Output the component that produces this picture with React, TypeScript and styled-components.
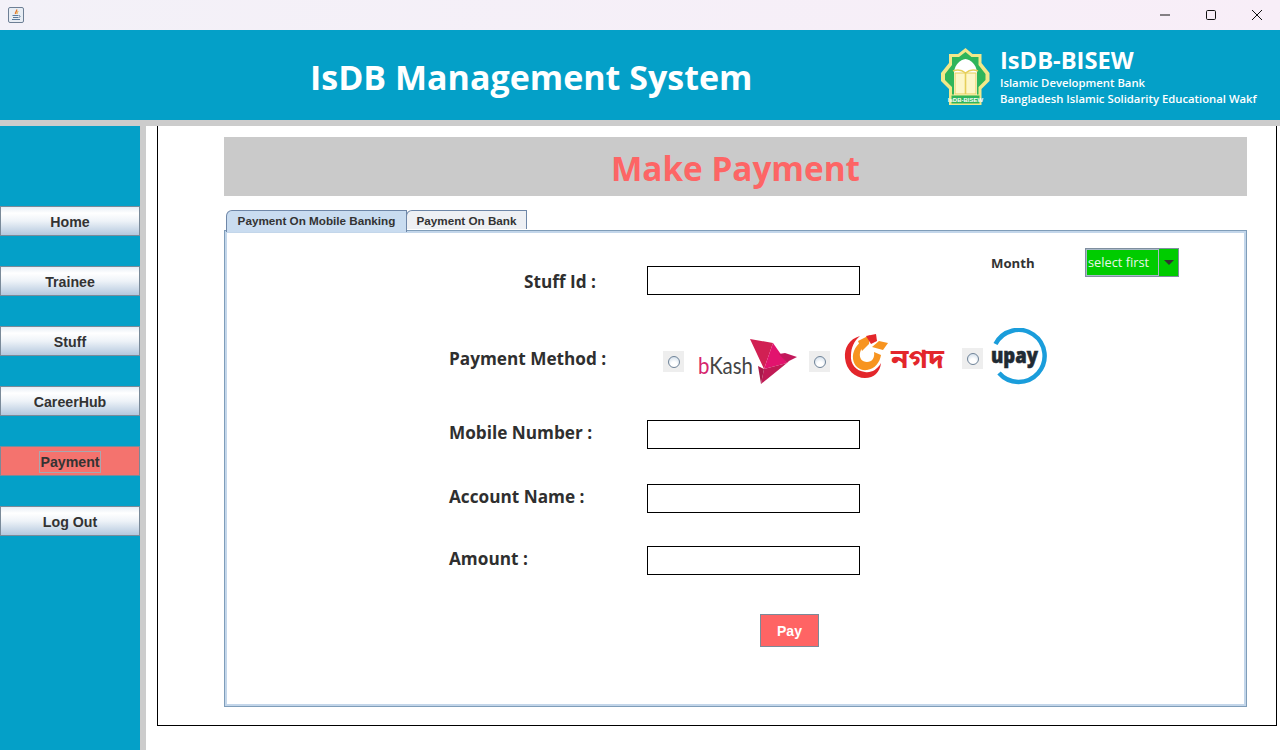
import styled, { createGlobalStyle } from "styled-components";

const GlobalStyle = createGlobalStyle`
  html, body {
    margin: 0;
    padding: 0;
    background: #ffffff;
  }
`;

const Window = styled.div`
  width: 1280px;
  height: 750px;
  display: flex;
  flex-direction: column;
  overflow: hidden;
  font-family: "Open Sans", "Noto Sans", sans-serif;
  background: #ffffff;
`;

const TitleBar = styled.div`
  height: 30px;
  flex-shrink: 0;
  display: flex;
  align-items: center;
  justify-content: space-between;
  background: linear-gradient(90deg, #f3f1f8, #f8eef8);
  padding-left: 8px;
`;

const WindowButtons = styled.div`
  display: flex;
  height: 100%;
`;

const WindowButton = styled.div`
  width: 46px;
  display: flex;
  align-items: center;
  justify-content: center;
`;

const Header = styled.header`
  height: 90px;
  flex-shrink: 0;
  background: #04a0c8;
  display: flex;
  align-items: center;
  color: #ffffff;
`;

const AppTitle = styled.h1`
  margin: 4px 0 0 310px;
  width: 631px;
  font-size: 34px;
  line-height: 46px;
  font-weight: 700;
  white-space: nowrap;
`;

const Brand = styled.div`
  display: flex;
  align-items: center;
  gap: 10px;
  margin-top: 3px;
`;

const BrandText = styled.div`
  display: flex;
  flex-direction: column;
`;

const BrandName = styled.div`
  font-size: 23.7px;
  line-height: 29px;
  font-weight: 700;
`;

const BrandLine = styled.div`
  font-size: 11.3px;
  line-height: 16px;
  font-weight: 600;
  white-space: nowrap;
`;

const Body = styled.div`
  flex: 1;
  display: flex;
  border-top: 6px solid #cccccc;
  min-height: 0;
`;

const Sidebar = styled.nav`
  width: 140px;
  flex-shrink: 0;
  background: #04a0c8;
  border-right: 6px solid #cccccc;
  padding-top: 80px;
  display: flex;
  flex-direction: column;
  gap: 30px;
`;

const NavButton = styled.button<{ $active?: boolean }>`
  width: 140px;
  height: 30px;
  padding: 2px 0 0;
  border: 1px solid #7a8a99;
  background: ${(p) =>
    p.$active
      ? "#f4736e"
      : "linear-gradient(180deg, #e6edf5 0%, #ffffff 22%, #eef3f8 50%, #b4c8de 100%)"};
  color: #333333;
  font-family: "Liberation Sans", Arial, sans-serif;
  font-size: 14.2px;
  font-weight: 700;
  display: flex;
  align-items: center;
  justify-content: center;
`;

const FocusBox = styled.span`
  border: 1px solid #a8a8b0;
  padding: 1px 0;
  line-height: 18px;
`;

const Main = styled.main`
  flex: 1;
  min-width: 0;
  padding: 0 3px 24px 11px;
  display: flex;
`;

const ContentFrame = styled.div`
  flex: 1;
  border: 1px solid #000000;
  border-top: none;
  padding: 11px 29px 0 66px;
`;

const Banner = styled.div`
  height: 57px;
  padding-top: 2px;
  background: #cacaca;
  color: #fd6565;
  font-size: 33.3px;
  font-weight: 700;
  display: flex;
  align-items: center;
  justify-content: center;
  margin-bottom: 14px;
`;

const TabStrip = styled.div`
  display: flex;
  height: 20px;
  padding-left: 2px;
`;

const Tab = styled.div<{ $selected?: boolean }>`
  width: ${(p) => (p.$selected ? "181px" : "121px")};
  height: ${(p) => (p.$selected ? "22px" : "19px")};
  margin-left: ${(p) => (p.$selected ? "0" : "-1px")};
  box-sizing: border-box;
  border: 1px solid #6f87a8;
  border-bottom: none;
  border-top-left-radius: 6px;
  position: relative;
  z-index: ${(p) => (p.$selected ? 1 : 0)};
  padding-bottom: ${(p) => (p.$selected ? "3px" : "0")};
  background: ${(p) => (p.$selected ? "#c9dcf0" : "#eef0f4")};
  color: #333333;
  font-family: "Liberation Sans", Arial, sans-serif;
  font-size: 11.7px;
  font-weight: 700;
  display: flex;
  align-items: center;
  justify-content: center;
  white-space: nowrap;
`;

const TabPanel = styled.section`
  height: 477px;
  box-sizing: border-box;
  border: 1px solid #7f9db9;
  box-shadow: inset 0 0 0 2px #c3d6ea;
  padding: 17px 0 0 224px;
`;

const TopRow = styled.div`
  display: flex;
  align-items: flex-start;
  height: 80px;
`;

const FormRow = styled.div<{ $top?: number }>`
  display: flex;
  align-items: center;
  height: 29px;
  margin-top: ${(p) => p.$top ?? 0}px;
`;

const StuffRow = styled(FormRow)`
  width: 411px;
`;

const FieldLabel = styled.label<{ $indent?: number; $raise?: number; $drop?: number }>`
  width: 198px;
  flex-shrink: 0;
  box-sizing: border-box;
  padding-left: ${(p) => p.$indent ?? 0}px;
  padding-bottom: ${(p) => p.$raise ?? 0}px;
  padding-top: ${(p) => p.$drop ?? 0}px;
  color: #2f2f2f;
  font-size: 17.2px;
  font-weight: 700;
  white-space: nowrap;
`;

const TextField = styled.input`
  width: 213px;
  height: 29px;
  box-sizing: border-box;
  border: 1px solid #000000;
  background: #ffffff;
  padding: 0 4px;
  margin: 0;
`;

const MonthGroup = styled.div`
  display: flex;
  align-items: center;
  margin-left: 131px;
`;

const MonthLabel = styled.span`
  width: 94px;
  color: #333333;
  font-size: 13.2px;
  font-weight: 700;
`;

const Combo = styled.div`
  width: 94px;
  height: 29px;
  box-sizing: border-box;
  border: 1px solid #7f8f9f;
  display: flex;
  background: #00cc00;
`;

const ComboValue = styled.div`
  flex: 1;
  border: 1px solid #a9b8c9;
  color: #e8f5e8;
  font-size: 12.8px;
  line-height: 25px;
  padding-left: 1px;
  white-space: nowrap;
`;

const ComboArrow = styled.div`
  width: 19px;
  display: flex;
  align-items: center;
  justify-content: center;
  &::before {
    content: "";
    border-left: 5px solid transparent;
    border-right: 5px solid transparent;
    border-top: 5px solid #333333;
  }
`;

const MethodRow = styled.div`
  display: flex;
  align-items: center;
  height: 60px;
  margin-bottom: 32px;
`;

const MethodOptions = styled.div`
  display: flex;
  align-items: flex-start;
  align-self: stretch;
  margin-left: 16px;
`;

const RadioCell = styled.span<{ $left?: number; $top: number }>`
  width: 21px;
  height: 21px;
  flex-shrink: 0;
  background: #eeeeee;
  display: flex;
  align-items: center;
  justify-content: center;
  margin-left: ${(p) => p.$left ?? 0}px;
  margin-top: ${(p) => p.$top}px;
  &::before {
    content: "";
    width: 12px;
    height: 12px;
    box-sizing: border-box;
    border-radius: 50%;
    border: 1px solid #6f8398;
    background: radial-gradient(circle at 50% 75%, #ffffff 30%, #c9d8e6 100%);
  }
`;

const LogoSlot = styled.svg<{ $gap: number; $top: number }>`
  display: block;
  flex-shrink: 0;
  margin-left: ${(p) => p.$gap}px;
  margin-top: ${(p) => p.$top}px;
`;

const PayRow = styled.div`
  display: flex;
  padding: 39px 0 0 311px;
`;

const PayButton = styled.button`
  width: 59px;
  height: 33px;
  border: 1px solid #7a8a99;
  background: #ff6464;
  color: #ffffff;
  font-family: "Liberation Sans", Arial, sans-serif;
  font-size: 14px;
  font-weight: 700;
  padding: 0;
`;

const JavaIcon = () => (
  <svg width="16" height="16" viewBox="0 0 16 16">
    <rect x="0.5" y="0.5" width="15" height="15" rx="1.5" fill="#e8edf4" stroke="#6d7f95" />
    <path d="M8.5 2.5c1 1.5-1.5 2.5-1 4.5" fill="none" stroke="#e2762a" strokeWidth="1.4" />
    <path d="M10 4c0 1-1.2 1.5-1 3" fill="none" stroke="#e2a02a" strokeWidth="1" />
    <path d="M4.5 8.5h6M5 10.5h5M4 12.5h8M11 8.5c1.500 0 1.500 2-.5 2" fill="none" stroke="#5a7a9c" strokeWidth="1" />
  </svg>
);

const MinimizeIcon = () => (
  <svg width="12" height="12" viewBox="0 0 12 12">
    <path d="M1 6h10" stroke="#111111" strokeWidth="1" />
  </svg>
);

const MaximizeIcon = () => (
  <svg width="12" height="12" viewBox="0 0 12 12">
    <rect x="1.5" y="1.5" width="9" height="9" rx="1.2" fill="none" stroke="#111111" />
  </svg>
);

const CloseIcon = () => (
  <svg width="12" height="12" viewBox="0 0 12 12">
    <path d="M1 1l10 10M11 1L1 11" stroke="#111111" strokeWidth="1" />
  </svg>
);

const IsdbLogo = () => (
  <svg width="49" height="58" viewBox="0 0 49 58">
    <path d="M24.5 0l7 6h9v9l8 10v8l-8 8v16H8V41l-8-8v-8l8-10V6h9z" fill="#f2e88a" />
    <path d="M24.5 4l6 5h7v8l7 9v6l-7 7v14H11V39l-7-7v-6l7-9V9h7z" fill="#2fb55a" />
    <path d="M13 47V24c1-8 6-12 11.500-13C30 12 35 16 36 24v23z" fill="#ffffff" />
    <rect x="14" y="25" width="21" height="21" fill="#fdf6c8" stroke="#e6cf5a" />
    <path d="M24.500 25v21M12 23c5-2 9-1 12.500 2 3.500-3 7.500-4 12.500-2" fill="none" stroke="#e6cf5a" strokeWidth="1.6" />
    <rect x="10" y="47" width="29" height="9" fill="#2fb55a" stroke="#f2e88a" />
    <text x="24.5" y="54" fontSize="6" fontWeight="700" fill="#ffffff" textAnchor="middle" fontFamily="'Liberation Sans', sans-serif">
      IsDB-BISEW
    </text>
  </svg>
);

const BkashLogo = () => (
  <LogoSlot $gap={13} $top={9} width="100" height="50" viewBox="0 0 100 50">
    <text x="1" y="37" fontSize="24" fontFamily="Lato, sans-serif" fill="#444444" textLength="55" lengthAdjust="spacingAndGlyphs">
      <tspan fill="#d6246e">b</tspan>Kash
    </text>
    <path d="M53 2l23 4-9 26z" fill="#d12053" />
    <path d="M76 6l14 20-23 6z" fill="#e2136e" />
    <path d="M67 32l23-6-26 21z" fill="#c01a55" />
    <path d="M67 32l-3 15-3-18z" fill="#a81a4a" />
    <path d="M82 17l6-1 12 4-8 4-2 2z" fill="#c2185b" />
  </LogoSlot>
);

const NagadLogo = () => (
  <LogoSlot $gap={13} $top={4} width="102" height="50" viewBox="0 0 102 50">
    <path d="M17 4C6 7 1 16 2 26c1 12 10 20 20 20 9 0 15-6 16-15-4 7-10 10-16 9-9-1-15-8-14-17 0-7 3-14 9-19z" fill="#e3262b" />
    <path d="M22 7c-9 5-13 13-12 20 1 8 8 12 14 11 8-1 13-8 14-15l-7-3c1 6-2 10-7 10s-8-4-7-9c1-5 4-9 9-11z" fill="#f79420" />
    <path d="M15 9l12-6-1 9-7 7z" fill="#f79420" />
    <path d="M23 4l10-2 1 7-6 3z" fill="#e3262b" />
    <path d="M36 9l9 2-5 7-11-3z" fill="#f79420" />
    <text x="48" y="36" fontSize="27" fontWeight="700" fill="#e3262b" fontFamily="'Noto Sans Bengali', 'Noto Sans', sans-serif" textLength="53" lengthAdjust="spacingAndGlyphs">
      নগদ
    </text>
  </LogoSlot>
);

const UpayLogo = () => (
  <LogoSlot $gap={7} $top={0} width="58" height="58" viewBox="0 0 58 58">
    <path d="M5.500 16A26 26 0 1 1 9 45" fill="none" stroke="#1a9ddb" strokeWidth="4.500" />
    <text x="1" y="35" fontSize="21" fontWeight="800" fill="#1f2a33" stroke="#1f2a33" strokeWidth="0.6" fontFamily="'Open Sans', sans-serif" textLength="47" lengthAdjust="spacingAndGlyphs">
      upay
    </text>
  </LogoSlot>
);

const App = () => (
  <>
    <GlobalStyle />
    <Window>
      <TitleBar>
        <JavaIcon />
        <WindowButtons>
          <WindowButton>
            <MinimizeIcon />
          </WindowButton>
          <WindowButton>
            <MaximizeIcon />
          </WindowButton>
          <WindowButton>
            <CloseIcon />
          </WindowButton>
        </WindowButtons>
      </TitleBar>
      <Header>
        <AppTitle>IsDB Management System</AppTitle>
        <Brand>
          <IsdbLogo />
          <BrandText>
            <BrandName>IsDB-BISEW</BrandName>
            <BrandLine>Islamic Development Bank</BrandLine>
            <BrandLine>Bangladesh Islamic Solidarity Educational Wakf</BrandLine>
          </BrandText>
        </Brand>
      </Header>
      <Body>
        <Sidebar>
          <NavButton>Home</NavButton>
          <NavButton>Trainee</NavButton>
          <NavButton>Stuff</NavButton>
          <NavButton>CareerHub</NavButton>
          <NavButton $active>
            <FocusBox>Payment</FocusBox>
          </NavButton>
          <NavButton>Log Out</NavButton>
        </Sidebar>
        <Main>
          <ContentFrame>
            <Banner>Make Payment</Banner>
            <TabStrip>
              <Tab $selected>Payment On Mobile Banking</Tab>
              <Tab>Payment On Bank</Tab>
            </TabStrip>
            <TabPanel>
              <TopRow>
                <StuffRow $top={18}>
                  <FieldLabel $indent={75} $drop={2}>Stuff Id :</FieldLabel>
                  <TextField />
                </StuffRow>
                <MonthGroup>
                  <MonthLabel>Month</MonthLabel>
                  <Combo>
                    <ComboValue>select first</ComboValue>
                    <ComboArrow />
                  </Combo>
                </MonthGroup>
              </TopRow>
              <MethodRow>
                <FieldLabel>Payment Method :</FieldLabel>
                <MethodOptions>
                  <RadioCell $top={23} />
                  <BkashLogo />
                  <RadioCell $left={12} $top={23} />
                  <NagadLogo />
                  <RadioCell $left={17} $top={20} />
                  <UpayLogo />
                </MethodOptions>
              </MethodRow>
              <FormRow>
                <FieldLabel $raise={5}>Mobile Number :</FieldLabel>
                <TextField />
              </FormRow>
              <FormRow $top={35}>
                <FieldLabel $raise={5}>Account Name :</FieldLabel>
                <TextField />
              </FormRow>
              <FormRow $top={33}>
                <FieldLabel $raise={5}>Amount :</FieldLabel>
                <TextField />
              </FormRow>
              <PayRow>
                <PayButton>Pay</PayButton>
              </PayRow>
            </TabPanel>
          </ContentFrame>
        </Main>
      </Body>
    </Window>
  </>
);

export default App;
